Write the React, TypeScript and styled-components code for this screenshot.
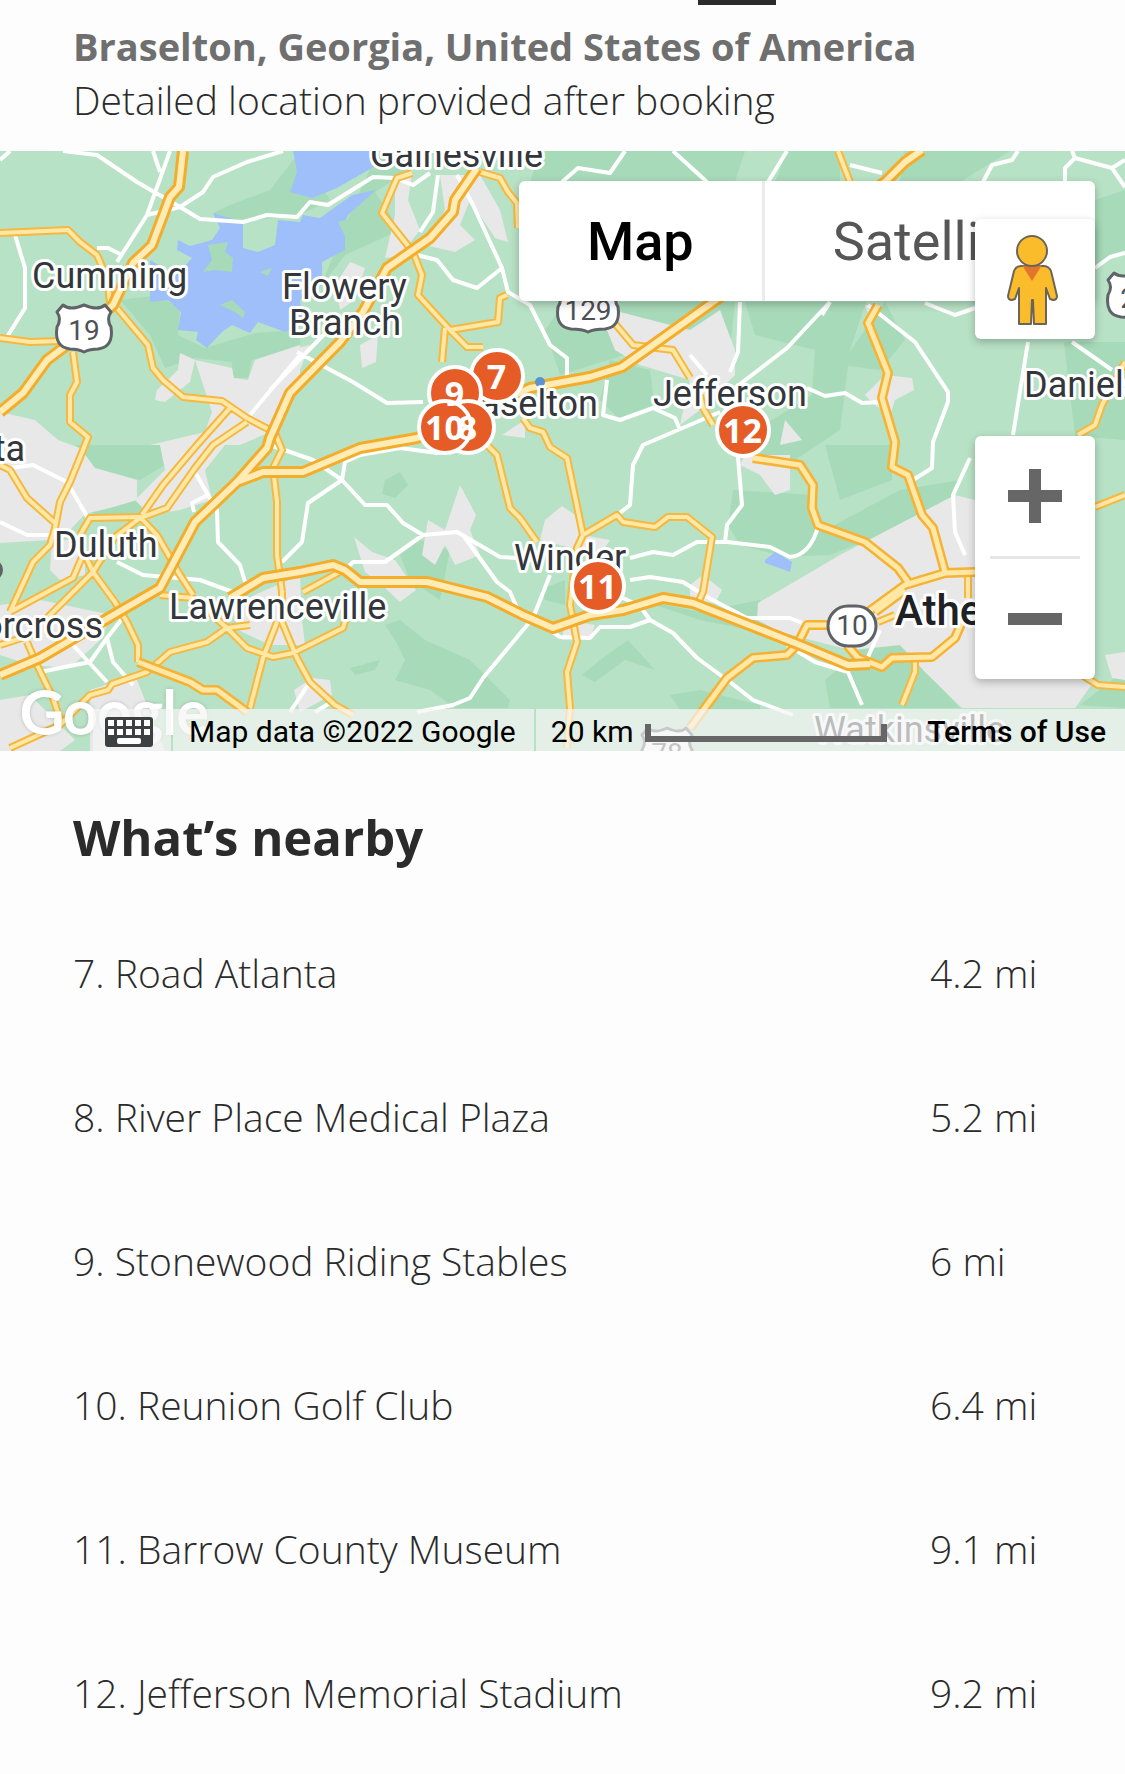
import styled, { createGlobalStyle, css } from "styled-components";

const places = [
  { id: 7, name: "Road Atlanta", distance: "4.2 mi" },
  { id: 8, name: "River Place Medical Plaza", distance: "5.2 mi" },
  { id: 9, name: "Stonewood Riding Stables", distance: "6 mi" },
  { id: 10, name: "Reunion Golf Club", distance: "6.4 mi" },
  { id: 11, name: "Barrow County Museum", distance: "9.1 mi" },
  { id: 12, name: "Jefferson Memorial Stadium", distance: "9.2 mi" },
];

// pin centres, measured from the centre line and the top of the map
const pins = [
  { id: 7, x: -66, y: 225 },
  { id: 9, x: -108, y: 242 },
  { id: 8, x: -95, y: 276 },
  { id: 10, x: -118, y: 276 },
  { id: 11, x: 35, y: 435 },
  { id: 12, x: 180, y: 279 },
];

const forests = [
  "M213 213 L240 222 L300 215 L330 200 L300 151 L270 190 L230 205Z",
  "M120 300 L160 295 L180 310 L178 335 L205 348 L255 333 L300 330 L300 345 L252 360 L248 378 L233 378 L232 362 L195 358 L165 368 L150 335Z",
  "M322 285 L345 255 L400 230 L375 192 L440 150 L415 151 L378 151 L345 225Z",
  "M540 151 H745 L735 182 H530Z",
  "M787 151 H840 V182 H775Z",
  "M565 302 H713 L640 350 L560 375 L545 330Z",
  "M655 302 L735 302 L730 350 L700 345 L685 355 L660 345Z",
  "M745 302 H866 L850 350 L840 430 L780 470 L740 440 L812 395 L815 350 L755 335Z",
  "M610 360 L650 370 L655 410 L620 420 L600 400Z",
  "M885 302 L905 340 L880 370 L840 365Z",
  "M905 151 H1010 L960 182 H900Z",
  "M1095 200 L1125 190 V250 L1095 265Z",
  "M1064 342 L1125 342 V440 L1075 436Z",
  "M733 490 L812 495 L825 530 L900 490 L960 480 L945 510 L830 555 L785 557 L740 545 L728 525Z",
  "M825 445 H892 V480 L840 500Z",
  "M640 600 L700 612 L760 600 L800 640 L700 620Z",
  "M75 445 H160 L165 465 L140 480 L95 468Z",
  "M85 510 L110 500 L140 498 L142 514 L100 516Z",
  "M385 480 L400 472 L408 485 L395 498 L382 494Z",
  "M400 555 L420 540 L450 550 L440 600 L410 580Z",
  "M395 640 L385 625 L400 620 L425 640 L470 660 L510 700 L508 708 H455 L430 690 L395 680 L405 660Z",
  "M350 668 L380 660 L375 670 L355 675Z",
  "M540 590 L565 580 V605 L545 600Z",
  "M582 675 L600 660 L628 640 L655 670 L625 660 L595 682Z",
  "M670 695 L700 690 L760 705 V710 H680Z",
  "M825 680 L860 650 L900 645 L960 708 H830Z",
  "M1080 705 L1125 670 V708Z",
];

const towns = [
  "M195 360 L232 368 L234 378 L248 380 L255 360 L300 345 V382 L275 430 L240 445 H150 L205 432 L212 412Z",
  "M157 390 L178 370 L180 353 L195 360 L190 382 L165 402 L155 400Z",
  "M0 412 L35 420 L58 440 L80 448 L95 468 L137 480 V500 L110 508 L85 514 L70 530 L50 540 L0 543Z",
  "M160 445 H225 L205 470 L212 500 L180 510 L150 515 L135 500 L165 470Z",
  "M52 540 H85 V575 L60 580 L50 570Z",
  "M0 605 L40 600 L112 615 L100 640 L70 668 L30 665 L0 655Z",
  "M0 700 L30 695 L75 740 L60 751 H0Z",
  "M90 690 L135 675 L165 751 H90Z",
  "M232 605 L300 575 L302 620 L305 645 L270 645 L238 630Z",
  "M294 690 L312 678 L330 680 L332 695 L300 712Z",
  "M354 537 L372 552 L395 560 L416 590 L400 602 L385 588 L365 572Z",
  "M422 555 L428 520 L445 530 L460 485 L476 515 L470 530 L480 555 L455 565 L445 545 L435 565Z",
  "M395 178 L412 175 L408 200 L420 230 L400 256 L385 258 L395 215Z",
  "M440 175 L480 175 L500 210 L508 242 L495 238 L470 200 L460 225 L475 240 L455 252 L425 245 L445 210Z",
  "M350 262 L365 268 L355 300 L340 310 L335 285Z",
  "M360 345 L378 335 L376 362 L362 368Z",
  "M270 355 L310 345 L300 370 L280 395 L270 400Z",
  "M605 325 L612 310 L690 330 L720 310 L735 350 L735 375 L700 410 L680 425 L690 380 L640 365 L615 350Z",
  "M745 455 H790 V490 L775 495 L760 475 L740 465Z",
  "M785 420 L802 440 L780 445Z",
  "M545 520 L562 506 L575 515 L582 535 L610 540 L600 555 L560 545 L540 540Z",
  "M565 620 L595 625 L590 638 L562 640Z",
  "M690 585 L703 575 L722 590 L715 603 L690 600Z",
  "M758 603 L840 555 L955 495 L975 500 V640 L1095 680 L1075 708 L962 708 L925 672 L900 645 L850 650 L780 632 L757 620Z",
  "M865 305 L880 305 L872 325Z",
  "M865 395 L885 375 L912 378 L914 390 L895 400 L890 415 L875 405Z",
  "M1105 655 L1125 652 V680 L1112 678Z",
  "M502 435 L525 420 L525 438Z",
];

const lakes = [
  "M293 151 H374 L377 165 L337 188 L312 198 L290 192 L297 172Z",
  "M213 213 L243 222 L243 248 L258 252 L275 245 L278 220 L300 222 L303 215 L320 218 L352 195 L376 190 L348 215 L345 222 L345 250 L322 262 L322 285 L300 300 L303 325 L285 332 L258 322 L250 333 L232 325 L222 332 L207 348 L196 340 L198 332 L178 330 L181 312 L168 300 L150 302 L150 260 L176 275 L192 258 L177 250 L178 240 L190 246 L212 240 L220 228Z",
  "M765 560 L775 552 L792 562 L790 572 L765 563Z",
];

const islands = [
  "M203 272 L212 260 L208 245 L228 242 L225 252 L233 258 L232 272 L215 270Z",
  "M220 305 L232 300 L245 312 L243 318 L235 312Z",
  "M260 272 L272 268 L268 276Z",
  "M338 222 L352 218 L357 230 L345 236Z",
];

const whiteRoads = [
  "M63 151 L97 155 L137 182 L180 207 L203 192 L213 177 L247 162 L283 151",
  "M180 207 L200 219 L243 222 L267 215 L297 217 L310 202 L328 205 L373 177 L395 178 L413 185 L430 173",
  "M0 160 L10 151",
  "M170 151 L147 215 L117 262",
  "M153 151 L160 172",
  "M147 215 L180 207",
  "M97 248 L108 248 L120 254",
  "M15 235 L25 268 L25 308 L7 337",
  "M300 355 L250 415",
  "M340 318 L270 390",
  "M438 175 L433 212 L420 232",
  "M457 175 L473 205 L502 268 L508 292 L530 305 L550 345 L567 358 L567 385",
  "M417 255 L437 260 L453 280 L477 288 L502 268",
  "M297 352 L353 382 L387 403 L423 402",
  "M562 182 L578 168 L610 173 L625 151",
  "M673 151 L707 182",
  "M787 151 L768 182",
  "M740 302 L738 352 L730 372",
  "M735 388 L787 348 L830 302",
  "M690 355 L707 375",
  "M807 388 L825 396 L845 393 L862 403 L882 402",
  "M607 380 L603 415 L620 420 L653 408 L675 418 L680 430",
  "M720 412 L643 445 L633 465 L630 505 L617 515",
  "M737 445 L742 505 L727 525 L725 542",
  "M630 558 L653 552 L673 555 L697 542 L727 542 L770 547 L790 557 Q810 555 818 527",
  "M630 580 L650 577 L683 582 L707 597 L747 618 L790 618 L807 625",
  "M623 598 L640 606 L650 620 L673 633 L697 658 L730 682 L753 700 L793 715",
  "M650 620 L630 627 L600 627 L590 638 L560 637 L533 618",
  "M787 645 L815 662 L848 672 L862 705",
  "M270 445 L313 460 L342 480 L365 505 L387 505 L403 523 L423 535 L457 532 L500 557 L517 558",
  "M423 535 L385 562 L353 562 L345 570",
  "M342 480 L308 503 L302 542 L282 562",
  "M342 480 L345 462 L360 455 L400 448 L437 453 L480 448",
  "M463 535 L497 582 L510 592 L517 608",
  "M550 575 L533 618 L483 678 L470 698 L453 705 L417 712",
  "M10 468 L33 465 L67 482 L88 518",
  "M0 522 L27 535 L50 535",
  "M117 562 L143 575 L200 580 L233 592",
  "M195 472 L208 495 L192 503 L194 512 M208 495 L217 510 L218 542 L240 565 L245 582",
  "M73 645 L107 682",
  "M40 672 L90 662 L107 638 L113 662 L133 685",
  "M107 638 L125 615",
  "M310 682 L290 712",
  "M330 703 L315 712",
  "M850 165 L882 173",
  "M983 182 L992 165 L1012 160 L1018 151",
  "M1072 151 L1075 158 L1065 168 L1065 182",
  "M1075 158 L1112 168 L1125 160 M1112 168 L1125 187",
  "M868 305 L915 342 L948 392 L948 402 L933 442 L932 468 L913 480",
  "M925 303 L955 315 L975 308",
  "M830 302 L822 315",
  "M1028 342 L1013 435",
  "M1072 342 L1112 370",
  "M1095 268 L1110 257 L1125 253",
  "M970 458 L953 495 L955 532 L965 555",
  "M880 630 L868 657",
];

const yellowRoads = [
  "M0 233 L68 230 L80 242 L97 255 L107 278 L110 302",
  "M0 338 L30 342 L60 341",
  "M73 352 L77 382 L70 395 L70 422 L88 437 L83 450 L70 482 L60 502 L55 528 L50 545 L33 562 L10 612",
  "M117 308 L148 345 L153 368 L163 380 L183 397 L222 401 L247 418 L270 430",
  "M230 408 L197 445 L163 485 L142 515",
  "M247 422 L213 445 L195 468 L167 508 L140 518 L115 537 L93 572 L47 618",
  "M273 428 L282 450 L273 468 L277 502 L277 555 L282 592",
  "M0 465 L10 470 L27 498 L55 523",
  "M80 535 L90 518 L140 517 L157 535 L180 575 L193 595",
  "M83 555 L73 578 L10 612",
  "M85 555 L93 572 L115 602 L127 622 L138 645 L138 662",
  "M0 645 L40 632",
  "M27 642 L37 665 L53 698 L62 725",
  "M10 748 L60 725 L90 695 L108 690 L112 684 L147 672 L170 652 L207 642 L227 628 L250 625",
  "M160 595 L193 598 L227 628 L247 648 L273 657 L293 653 L343 628 L347 615",
  "M250 708 L263 658 L277 622",
  "M282 592 L282 622 L297 658 L310 682 L335 705 L353 715",
  "M303 592 L347 568",
  "M412 173 L397 178 L382 213 L413 252 L422 275 L418 295 L450 330 L467 347 L483 347",
  "M445 328 L442 362",
  "M450 330 L498 322 L500 298 L507 295",
  "M480 172 L500 178 L508 192 L517 203 L518 228",
  "M523 418 L530 428 L543 432 L550 447 L567 458 L583 535 L577 548 L570 605 L577 642 L567 672 L570 708 L567 748",
  "M487 445 L497 455 L510 508 L520 518 L537 542",
  "M583 535 L617 515 L623 522 L655 527 L668 517 L687 517 L712 537 L703 592 L697 605",
  "M612 320 L633 345 L673 350 L690 378",
  "M700 395 L703 408 L713 425",
  "M838 151 L850 182",
  "M1125 362 L1102 405 L1095 425 L1078 435",
  "M1095 507 L1125 495",
  "M1082 675 L1098 685 L1125 687",
  "M878 622 L895 615",
  "M915 658 L915 672 L902 705",
  "M968 575 L968 598",
];

const wideRoads = [
  "M878 305 L868 323 L888 373 L882 398 L895 442 L892 467 L908 475 L922 515 L933 528 L945 572",
  "M753 458 L800 465 L813 485 L812 508 L818 525 L865 542 L898 568 L908 582",
  "M975 572 L945 573 L905 585 L868 612",
  "M905 590 L875 612",
  "M827 625 L807 625 L797 645 L787 655 L753 658 L727 678 L690 728",
  "M847 645 L858 658 L882 667 L892 658 L932 657 L955 638 L962 622",
  "M138 662 L190 682 L203 690 L217 690 L247 712",
];

const highways = [
  "M183 151 L179 187 L170 197 L152 245 L133 263 L113 305 L67 345 L47 360 L23 393 L0 412",
  "M477 168 L455 200 L453 212 L430 238 L387 268 L363 312 L340 342 L290 393 L270 438 L267 448 L237 482 L195 522 L160 588 L110 617 L40 658 L0 675",
  "M237 482 L263 472 L303 472 L360 448 L417 438 L500 402 L530 388 L590 377 L622 367 L653 345 L713 302 L885 182 L905 162 L922 150",
  "M230 598 L263 578 L300 572 L333 565 L345 570 L360 582 L427 582 L487 597 L523 615 L553 628 L590 615 L623 610 L663 598 L693 603 L800 645 L848 665 L870 664",
];

const cities = [
  { name: "Gainesville", x: 370, y: 167 },
  { name: "Cumming", x: 32, y: 288 },
  { name: "Flowery", x: 282, y: 299 },
  { name: "Branch", x: 289, y: 335 },
  { name: "Braselton", x: 598, y: 416, anchor: "end" },
  { name: "Jefferson", x: 653, y: 406 },
  { name: "Danielsville", x: 1024, y: 397 },
  { name: "Alpharetta", x: 25, y: 461, anchor: "end" },
  { name: "Duluth", x: 54, y: 557 },
  { name: "Norcross", x: 103, y: 638, anchor: "end" },
  { name: "Lawrenceville", x: 169, y: 619 },
  { name: "Winder", x: 514, y: 570 },
  { name: "Watkinsville", x: 814, y: 742 },
] as const;

const UsShield = ({ x, y, wide, label }: { x: number; y: number; wide: number; label: string }) => (
  <g transform={`translate(${x} ${y})`}>
    <path
      d={`M${-wide + 7} -24 Q${-wide / 2} -18 0 -24 Q${wide / 2} -18 ${wide - 7} -24 L${wide - 1} -17 Q${wide - 6} -10 ${wide - 1} -2 Q${wide + 2} 18 ${wide - 14} 20 Q6 20 0 23 Q-6 20 ${-wide + 14} 20 Q${-wide - 2} 18 ${-wide + 1} -2 Q${-wide + 6} -10 ${-wide + 1} -17Z`}
      fill="#fff"
      stroke="#5f6368"
      strokeWidth="3"
      strokeLinejoin="round"
    />
    <RouteNumber x="0" y="11">{label}</RouteNumber>
  </g>
);

const Terrain = () => (
  <MapSvg viewBox="0 151 1125 600" preserveAspectRatio="xMidYMid slice" aria-hidden="true">
    <rect y="151" width="1125" height="600" fill="#b8e2c5" />
    <path d={forests.join(" ")} fill="#a7dab8" />
    <path d={towns.join(" ")} fill="#e8e8e8" />
    <path d={lakes.join(" ")} fill="#9fbffa" />
    <path d={islands.join(" ")} fill="#a7dab8" />
    <Road d={whiteRoads.join(" ")} stroke="#fff" strokeWidth="4" />
    <Road d={yellowRoads.join(" ")} stroke="#f5b840" strokeWidth="8" />
    <Road d={yellowRoads.join(" ")} stroke="#ffe8a6" strokeWidth="4" />
    <Road d={wideRoads.join(" ")} stroke="#f5b234" strokeWidth="10" />
    <Road d={wideRoads.join(" ")} stroke="#ffe8a6" strokeWidth="5" />
    <Road d={highways.join(" ")} stroke="#f4ad2b" strokeWidth="12" />
    <Road d={highways.join(" ")} stroke="#ffebb5" strokeWidth="6" />
    <circle cx="540" cy="382" r="5" fill="#5b93cf" />
    <UsShield x={84} y={329} wide={28} label="19" />
    <UsShield x={588} y={309} wide={31} label="129" />
    <UsShield x={1136} y={297} wide={29} label="29" />
    <UsShield x={667} y={752} wide={26} label="78" />
    <rect x="828" y="606" width="48" height="40" rx="20" fill="#fff" stroke="#5f6368" strokeWidth="3" />
    <RouteNumber x="852" y="635">10</RouteNumber>
    <circle cx="-8" cy="570" r="11" fill="#5f6368" />
    {cities.map((city) => (
      <CityName key={city.name} x={city.x} y={city.y} textAnchor={"anchor" in city ? city.anchor : "start"}>
        {city.name}
      </CityName>
    ))}
    <BigCityName x="895" y="625">Athens</BigCityName>
  </MapSvg>
);

const Pegman = () => (
  <svg width="52" height="92" viewBox="0 0 52 92" aria-hidden="true">
    <g fill="#fbbc2b" stroke="#6b6559" strokeWidth="2" strokeLinejoin="round">
      <path d="M14 32 H36 Q42 32 44 37 L50 62 Q50 66 46 66 L43 65 L39 54 V90 H27 L26 66 H25 L24 90 H12 V54 L8 65 L5 66 Q1 66 1 62 L7 37 Q9 32 14 32Z" />
      <circle cx="25" cy="17" r="15" />
    </g>
    <path d="M15 31 Q25 35 35 31 L25 47Z" fill="#e2752d" />
  </svg>
);

const Keyboard = () => (
  <svg width="48" height="30" viewBox="0 0 48 30" aria-hidden="true">
    <rect width="48" height="30" rx="3" fill="#3c4043" />
    {[3, 12, 21, 30, 39].map((x) => (
      <path key={x} d={`M${x} 3h6v6h-6z M${x} 12h6v6h-6z`} fill="#fff" />
    ))}
    <rect x="12" y="21" width="24" height="6" rx="2" fill="#fff" />
  </svg>
);

const App = () => {
  return (
    <Page>
      <GlobalStyle />
      <Header>
        <Region>Braselton, Georgia, United States of America</Region>
        <Note>Detailed location provided after booking</Note>
      </Header>

      <MapArea>
        <Terrain />
        {pins.map((pin) => (
          <Pin key={pin.id} $x={pin.x} $y={pin.y}>
            <PinNumber>{pin.id}</PinNumber>
          </Pin>
        ))}
        <GoogleMark>Google</GoogleMark>

        <MapTypes>
          <TypeButton type="button" $active>Map</TypeButton>
          <TypeButton type="button">Satellite</TypeButton>
        </MapTypes>
        <StreetButton type="button" aria-label="Street View">
          <Pegman />
        </StreetButton>
        <ZoomBox>
          <ZoomButton type="button" aria-label="Zoom in">
            <svg width="54" height="54" viewBox="0 0 54 54"><path d="M21 0h12v21h21v12H33v21H21V33H0V21h21z" fill="#666" /></svg>
          </ZoomButton>
          <ZoomLine />
          <ZoomButton type="button" aria-label="Zoom out">
            <svg width="54" height="12" viewBox="0 0 54 12"><path d="M0 0h54v12H0z" fill="#666" /></svg>
          </ZoomButton>
        </ZoomBox>

        <Credits>
          <KeyboardButton type="button" aria-label="Keyboard shortcuts">
            <Keyboard />
          </KeyboardButton>
          <MapData>Map data ©2022 Google</MapData>
          <ScaleTerms>
            <Scale>
              20 km
              <ScaleBar />
            </Scale>
            <Terms href="#terms">Terms of Use</Terms>
          </ScaleTerms>
        </Credits>
      </MapArea>

      <Nearby>
        <Title>What’s nearby</Title>
        <List>
          {places.map((place) => (
            <Row key={place.id}>
              <span>{place.id}. {place.name}</span>
              <Distance>{place.distance}</Distance>
            </Row>
          ))}
        </List>
      </Nearby>
    </Page>
  );
};

export default App;

const GlobalStyle = createGlobalStyle`
  * {
    box-sizing: border-box;
  }

  body {
    margin: 0;
    background-color: #fdfdfd;
    overflow-x: hidden;
  }
`;

const Page = styled.main`
  font-family: "Open Sans", "Noto Sans", sans-serif;
  font-size: 39px;
  font-weight: 350;
  line-height: 54px;
  color: #2b2b2b;
`;

const Header = styled.header`
  padding: 19px 73px 24px;
  /* end of the tab underline above the address */
  background: linear-gradient(#2b2b2b, #2b2b2b) 698px 0 / 78px 5px no-repeat;
`;

const Region = styled.div`
  font-size: 38px;
  font-weight: 700;
  color: #6f6f6f;
`;

const Note = styled.div``;

const MapArea = styled.section`
  position: relative;
  isolation: isolate;
  height: 600px;
  overflow: hidden;
  font-family: Roboto, sans-serif;
  font-weight: 400;
`;

const MapSvg = styled.svg`
  display: block;
  width: 100%;
  height: 100%;
`;

const Road = styled.path`
  fill: none;
  stroke-linejoin: round;
`;

const CityName = styled.text`
  font-size: 36px;
  fill: #33373b;
  stroke: #fff;
  stroke-width: 6px;
  stroke-linejoin: round;
  paint-order: stroke;
`;

const BigCityName = styled(CityName)`
  font-size: 42px;
  font-weight: 500;
  fill: #202124;
`;

const RouteNumber = styled.text`
  font-size: 28px;
  fill: #4d5156;
  text-anchor: middle;
`;

const Pin = styled.div<{ $x: number; $y: number }>`
  position: absolute;
  left: calc(50% + ${({ $x }) => $x}px);
  top: ${({ $y }) => $y}px;
  width: 56px;
  height: 56px;
  margin: -28px 0 0 -28px;
  border: 4px solid #fff;
  border-radius: 50%;
  background-color: #e65c27;
  display: flex;
  align-items: center;
  justify-content: center;
  font-family: "Noto Sans", sans-serif;
  font-size: 34px;
  font-weight: 700;
  line-height: 1;
  color: #fff;
`;

/* numbers stay above the discs of neighbouring pins */
const PinNumber = styled.span`
  position: relative;
  z-index: 1;
`;

const GoogleMark = styled.div`
  position: absolute;
  left: 20px;
  bottom: 4px;
  font-family: Lato, sans-serif;
  font-size: 60px;
  line-height: 72px;
  color: #fff;
  -webkit-text-stroke: 2px #fff;
  text-shadow: 0 0 4px rgba(0, 0, 0, 0.3);
`;

const panel = css`
  background-color: #fff;
  border-radius: 6px;
  box-shadow: 0 3px 9px rgba(0, 0, 0, 0.25);
`;

const button = css`
  border: 0;
  padding: 0;
  background: none;
  font-family: inherit;
  cursor: pointer;
`;

const MapTypes = styled.div`
  ${panel}
  position: absolute;
  top: 30px;
  right: 30px;
  width: 576px;
  height: 120px;
  display: flex;
  overflow: hidden;
`;

const TypeButton = styled.button<{ $active?: boolean }>`
  ${button}
  padding: 0 68px;
  font-size: 54px;
  font-weight: ${({ $active }) => ($active ? 500 : 400)};
  color: ${({ $active }) => ($active ? "#000" : "#565656")};

  & + & {
    border-left: 3px solid #ebebeb;
  }
`;

const StreetButton = styled.button`
  ${button}
  ${panel}
  position: absolute;
  top: 68px;
  right: 30px;
  width: 120px;
  height: 120px;
  padding: 2px 4px 0 0;
  display: flex;
  align-items: center;
  justify-content: center;
`;

const ZoomBox = styled.div`
  ${panel}
  position: absolute;
  right: 30px;
  bottom: 72px;
  width: 120px;
`;

const ZoomButton = styled.button`
  ${button}
  width: 100%;
  height: 120px;
  display: flex;
  align-items: center;
  justify-content: center;
`;

const ZoomLine = styled.div`
  height: 3px;
  margin: 0 15px;
  background-color: #e6e6e6;
`;

const Credits = styled.div`
  position: absolute;
  left: 93px;
  right: 0;
  bottom: 0;
  height: 42px;
  display: flex;
  gap: 2px;
  font-size: 30px;
  line-height: 46px;
  color: #000;
`;

const segment = css`
  background-color: rgba(245, 245, 245, 0.7);
  white-space: nowrap;
`;

const KeyboardButton = styled.button`
  ${button}
  ${segment}
  padding: 6px 18px 0 12px;
`;

const MapData = styled.div`
  ${segment}
  padding: 0 18px 0 16px;
`;

const ScaleTerms = styled.div`
  ${segment}
  flex: 1;
  padding: 0 19px 0 15px;
  display: flex;
  justify-content: space-between;
`;

const Scale = styled.div`
  display: flex;
  gap: 12px;
`;

const ScaleBar = styled.div`
  width: 242px;
  height: 18px;
  margin-top: 15px;
  border: 6px solid #666;
  border-top: 0;
`;

const Terms = styled.a`
  font-weight: 500;
  color: inherit;
  text-decoration: none;
`;

const Nearby = styled.section`
  padding: 58px 73px 0;
`;

const Title = styled.h2`
  margin: 0;
  font-size: 49px;
  font-weight: 700;
  line-height: 56px;
`;

const List = styled.ul`
  margin: 81px 0 0;
  padding: 0;
  list-style: none;
`;

const Row = styled.li`
  display: flex;
  justify-content: space-between;
  padding-bottom: 90px;

  &:last-child {
    padding-bottom: 50px;
  }
`;

const Distance = styled.span`
  flex: 0 0 122px;
`;
